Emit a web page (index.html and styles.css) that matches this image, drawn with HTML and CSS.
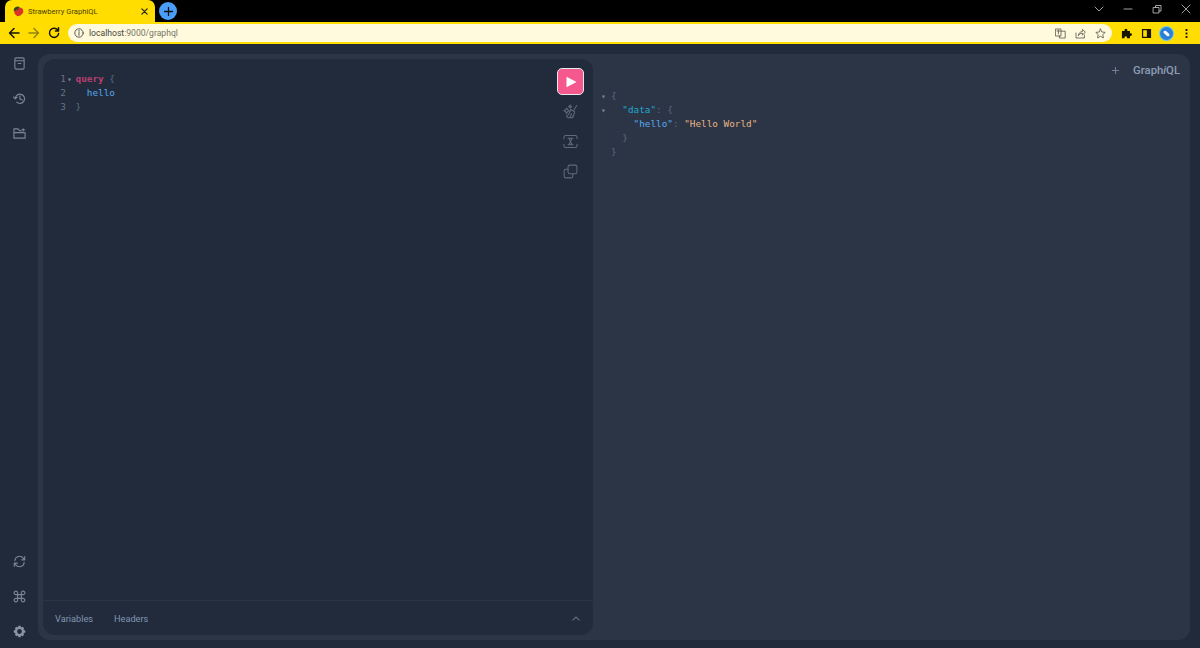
FILE: index.html
```html
<!doctype html>
<html>
  <head>
    <meta http-equiv="content-type" content="text/html; charset=UTF-8">
    <title>Strawberry GraphiQL</title>
    <link rel="stylesheet" href="styles.css">
  </head>

  <body>
    <div class="tabStrip">
      <div class="tab">
        <svg class="favicon" viewBox="0 0 12 12">
          <path fill="#d8342a" d="M3 2.6 Q7 .6 10.2 2.6 Q12.2 5.4 10.4 8.2 Q7.6 11.6 4.4 11 Q1.4 9.6 1.2 6 Q1.4 3.6 3 2.6 Z"/>
          <path fill="#33481f" d="M.8 5.6 Q.4 2 3 1 Q5.4 -.2 7.4 1.4 L5.6 2.6 L6 4.4 L4 3.8 L2.8 5.8 L2 4.6 Z"/>
        </svg>
        <span class="tabTitle">Strawberry GraphiQL</span>
        <svg class="tabClose" viewBox="0 0 8 8"><path d="M1 1 L7 7 M7 1 L1 7"/></svg>
      </div>
      <div class="newTab">
        <svg viewBox="0 0 10 10"><path d="M5 .5 V9.5 M.5 5 H9.5"/></svg>
      </div>
      <div class="windowBtns">
        <svg viewBox="0 0 10 10"><path d="M1 3 L5 7 L9 3"/></svg>
        <svg viewBox="0 0 10 10"><path d="M1 5 H9"/></svg>
        <svg viewBox="0 0 10 10"><path d="M1.5 3.5 H7 V9 H1.5 Z M3.5 3.5 V1.5 H9 V7 H7"/></svg>
        <svg viewBox="0 0 10 10"><path d="M1 1 L9 9 M9 1 L1 9"/></svg>
      </div>
    </div>

    <div class="toolbar">
      <svg class="navBtn" viewBox="0 0 12 12"><path d="M11 6 H1.5 M6 1.5 L1.5 6 L6 10.5"/></svg>
      <svg class="navBtn off" viewBox="0 0 12 12"><path d="M1 6 H10.5 M6 1.5 L10.5 6 L6 10.5"/></svg>
      <svg class="navBtn" viewBox="0 0 12 12"><path d="M10 3.4 A4.6 4.6 0 1 0 10.6 6.6 M10.5 .8 V3.9 H7.4"/></svg>
      <div class="omnibox">
        <svg class="infoIcon" viewBox="0 0 10 10">
          <circle cx="5" cy="5" r="4.2"/>
          <path d="M5 4.4 V7.4 M5 2.4 V3.4"/>
        </svg>
        <span class="url"><b>localhost</b>:9000/graphql</span>
        <div class="omniIcons">
          <svg viewBox="0 0 11 11"><path d="M.8 1 H6 V8 H.8 Z M6 3.2 H10.2 V10 H4.4 V8 M2 3 H5 M3.4 2 V6"/></svg>
          <svg viewBox="0 0 11 11"><path d="M1 5 V10 H9.4 V7 M3.4 7.4 Q4 3.6 7.4 3.6 V1.4 L10.4 4.2 L7.4 7 V5.2 Q5 5 3.4 7.4"/></svg>
          <svg viewBox="0 0 11 11"><path d="M5.5 1 L6.9 4 L10.2 4.4 L7.8 6.6 L8.4 9.9 L5.5 8.3 L2.6 9.9 L3.2 6.6 L.8 4.4 L4.1 4 Z"/></svg>
        </div>
      </div>
      <div class="extIcons">
        <svg viewBox="0 0 12 12"><path class="solid" d="M1 3.4 H3.8 Q3.6 .8 5.4 .8 Q7.2 .8 7 3.4 H9.8 V5.8 Q12 5.6 12 7.2 Q12 8.8 9.8 8.6 V11.2 H6.6 Q6.8 9 5.2 9 Q3.6 9 3.8 11.2 H1 Z"/></svg>
        <svg viewBox="0 0 12 12"><path class="solid" d="M1 1 H11 V11 H1 Z M2.4 2.4 V9.6 H6.4 V2.4 Z" fill-rule="evenodd"/></svg>
        <div class="avatar"><span></span></div>
        <svg viewBox="0 0 12 12"><path class="solid" d="M5 1.2 H7 V3.2 H5 Z M5 5 H7 V7 H5 Z M5 8.8 H7 V10.8 H5 Z"/></svg>
      </div>
    </div>

    <div class="app">
      <div class="sidebar">
        <div class="sideGroup">
          <svg viewBox="0 0 14 14"><path d="M2 2.4 Q2 1 3.4 1 H10.6 Q12 1 12 2.4 V11.6 Q12 13 10.6 13 H3.4 Q2 13 2 11.6 Z M2 4 H12 M5.6 7 H8.4"/></svg>
          <svg viewBox="0 0 14 14"><path d="M2.4 7 A5 5 0 1 1 4 11 M.6 5.4 L2.4 7.4 L4.4 5.6 M7.4 4 V7.4 L10 8.6"/></svg>
          <svg viewBox="0 0 14 14"><path d="M1 12 V2 H5.4 L7 4 H9 M12 6 H1 M13 6 V12 H1 M11 2 V4.4 M9.6 3 H12.6"/></svg>
        </div>
        <div class="sideGroup">
          <svg viewBox="0 0 14 14"><path d="M2 6 A5 5 0 0 1 11 3.4 L12.4 5 M12 8 A5 5 0 0 1 3 10.6 L1.6 9 M12.6 1.8 V5.2 H9.4 M1.4 12.2 V8.8 H4.6"/></svg>
          <svg viewBox="0 0 14 14"><path d="M5 5 H9 V9 H5 Z M5 5 H3.2 A1.9 1.9 0 1 1 5 3.2 Z M9 5 V3.2 A1.9 1.9 0 1 1 10.8 5 Z M5 9 V10.8 A1.9 1.9 0 1 1 3.2 9 Z M9 9 H10.8 A1.9 1.9 0 1 1 9 10.8 Z"/></svg>
          <svg viewBox="0 0 14 14"><path class="gear" d="M7 4.4 A2.6 2.6 0 1 0 7 9.6 A2.6 2.6 0 1 0 7 4.4 Z M5.8 .8 H8.2 L8.6 2.6 L10.2 1.8 L12 3.6 L11.2 5.2 L13.2 5.8 V8.2 L11.2 8.8 L12 10.4 L10.2 12.2 L8.6 11.4 L8.2 13.2 H5.8 L5.4 11.4 L3.8 12.2 L2 10.4 L2.8 8.8 L.8 8.2 V5.8 L2.8 5.2 L2 3.6 L3.8 1.8 L5.4 2.6 Z" fill-rule="evenodd"/></svg>
        </div>
      </div>

      <div class="panel">
        <div class="editor">
          <div class="editorMain">
            <div class="code">
              <div class="line"><span class="num">1</span><span class="fold">▾</span><span class="kw">query</span> <span class="punct">{</span></div>
              <div class="line"><span class="num">2</span><span class="fold"></span>  <span class="field">hello</span></div>
              <div class="line"><span class="num">3</span><span class="fold"></span><span class="punct">}</span></div>
            </div>
            <div class="tools">
              <div class="execute">
                <svg viewBox="0 0 12 12"><path d="M1.5 .8 L11.5 6 L1.5 11.2 Z"/></svg>
              </div>
              <svg class="tool" viewBox="0 0 16 16"><path d="M14.6 1.6 L11.2 7 M8.4 5.8 L12.6 8.4 L10.4 14.6 H5.4 Q3.8 14 3.8 12.8 Q6.8 11.4 8.4 5.8 M7.2 14.4 L9.2 10.4 M10 14.4 L11.2 11.6 M3.8 4.4 L4.8 6.2 L6.6 7.2 L4.8 8.2 L3.8 10 L2.8 8.2 L1 7.2 L2.8 6.2 Z M7.6 1 L8.2 2.2 L9.4 2.8 L8.2 3.4 L7.6 4.6 L7 3.4 L5.8 2.8 L7 2.2 Z"/></svg>
              <svg class="tool" viewBox="0 0 16 16"><path d="M1 5 V3.6 Q1 1.6 3 1.6 H13 Q15 1.6 15 3.6 V5 M1 11 V12.4 Q1 14.4 3 14.4 H13 Q15 14.4 15 12.4 V11 M5.4 4.6 H10.6 M5.4 11.4 H10.6 M6.4 4.6 L9.6 11.4 M9.6 4.6 L6.4 11.4"/></svg>
              <svg class="tool" viewBox="0 0 16 16"><path d="M5.4 3 Q5.4 1.2 7.2 1.2 H13 Q14.8 1.2 14.8 3 V8.6 Q14.8 10.4 13 10.4 H7.2 Q5.4 10.4 5.4 8.6 Z M5.4 5.6 H3 Q1.2 5.6 1.2 7.4 V13 Q1.2 14.8 3 14.8 H8.6 Q10.4 14.8 10.4 13 V10.4"/></svg>
            </div>
          </div>
          <div class="editorFooter">
            <span class="footTab">Variables</span>
            <span class="footTab">Headers</span>
            <svg class="chevron" viewBox="0 0 8 5"><path d="M.8 4.2 L4 1 L7.2 4.2"/></svg>
          </div>
        </div>

        <div class="result">
          <div class="resultHead">
            <svg viewBox="0 0 8 8"><path d="M4 .4 V7.6 M.4 4 H7.6"/></svg>
            <span class="logo">Graph<i>i</i>QL</span>
          </div>
          <div class="json">
            <div class="line"><span class="fold">▾</span><span class="punct">{</span></div>
            <div class="line"><span class="fold">▾</span>  <span class="key">"data"</span><span class="punct">: {</span></div>
            <div class="line"><span class="fold"></span>    <span class="field">"hello"</span><span class="punct">: </span><span class="str">"Hello World"</span></div>
            <div class="line"><span class="fold"></span>  <span class="punct">}</span></div>
            <div class="line"><span class="fold"></span><span class="punct">}</span></div>
          </div>
        </div>
      </div>
    </div>
  </body>
</html>
```

FILE: styles.css
```css
html, body {
  margin: 0;
  height: 100%;
  overflow: hidden;
}

body {
  display: flex;
  flex-direction: column;
  background-color: #212a3a;
  font-family: "Roboto", "Liberation Sans", sans-serif;
}

svg {
  display: block;
  fill: none;
  stroke-linecap: round;
  stroke-linejoin: round;
}

/* browser chrome */

.tabStrip {
  display: flex;
  align-items: center;
  height: 22px;
  padding-left: 5px;
  background-color: #000;
}

.tab {
  display: flex;
  align-items: center;
  width: 150px;
  height: 22px;
  padding: 0 7px 0 8px;
  box-sizing: border-box;
  border-radius: 7px 7px 0 0;
  background-color: #ffdd00;
}

.favicon {
  width: 11px;
  height: 11px;
}

.tabTitle {
  flex: 1;
  margin-left: 4px;
  font-size: 7.6px;
  color: #4d4300;
}

.tabClose {
  width: 7px;
  height: 7px;
  stroke: #222;
  stroke-width: 1.4;
}

.newTab {
  display: flex;
  align-items: center;
  justify-content: center;
  width: 18px;
  height: 18px;
  margin-left: 4px;
  border-radius: 50%;
  background-color: #4a9df8;
}

.newTab svg {
  width: 9px;
  height: 9px;
  stroke: #101010;
  stroke-width: 1.4;
}

.windowBtns {
  display: flex;
  gap: 19px;
  margin-left: auto;
  padding: 0 9px 5px 0;
}

.windowBtns svg {
  width: 10px;
  height: 10px;
  stroke: #b4b4b4;
  stroke-width: .9;
}

.toolbar {
  display: flex;
  align-items: center;
  height: 22px;
  padding-left: 8px;
  background-color: #ffdd00;
}

.navBtn {
  width: 12px;
  height: 12px;
  margin-right: 8px;
  stroke: #151200;
  stroke-width: 1.5;
}

.navBtn.off {
  stroke: #94830f;
}

.omnibox {
  display: flex;
  flex: 1;
  align-items: center;
  height: 18px;
  padding: 0 6px;
  border-radius: 9px;
  background-color: #fff9de;
}

.infoIcon {
  width: 10px;
  height: 10px;
  stroke: #4a4a44;
  stroke-width: .9;
}

.url {
  margin-left: 5px;
  font-size: 8.6px;
  color: #77756a;
}

.url b {
  font-weight: 400;
  color: #46453c;
}

.omniIcons {
  display: flex;
  gap: 9px;
  margin-left: auto;
}

.omniIcons svg {
  width: 11px;
  height: 11px;
  stroke: #55544a;
  stroke-width: .8;
}

.extIcons {
  display: flex;
  align-items: center;
  gap: 9px;
  padding: 0 8px 0 9px;
}

.extIcons svg {
  width: 11px;
  height: 11px;
}

.solid {
  fill: #191500;
}

.avatar {
  display: flex;
  align-items: center;
  justify-content: center;
  width: 13px;
  height: 13px;
  margin: 0 -1px;
  border-radius: 50%;
  background-color: #2b7fd6;
  box-shadow: 0 0 0 1px #6cc8f5;
}

.avatar span {
  width: 7px;
  height: 3px;
  border-radius: 2px;
  background-color: #fff;
  transform: rotate(40deg);
}

/* graphiql */

.app {
  display: flex;
  flex: 1;
  min-height: 0;
}

.sidebar {
  display: flex;
  flex-direction: column;
  justify-content: space-between;
  width: 38px;
  padding: 13px 0 10px;
  box-sizing: border-box;
}

.sideGroup {
  display: flex;
  flex-direction: column;
  align-items: center;
  gap: 22px;
}

.sideGroup svg {
  width: 13px;
  height: 13px;
  stroke: #7a8696;
  stroke-width: 1.2;
}

.sideGroup .gear {
  fill: #8a95a3;
  stroke: none;
}

.panel {
  display: flex;
  flex: 1;
  margin: 10px 10px 8px 0;
  padding: 5px 0 5px 5px;
  border-radius: 12px;
  background-color: #2c3546;
}

.editor {
  display: flex;
  flex-direction: column;
  width: 550px;
  border-radius: 12px;
  background-color: #212b3b;
}

.editorMain {
  display: flex;
  flex: 1;
}

.code {
  flex: 1;
  padding-top: 13px;
}

.code, .json {
  font-family: "DejaVu Sans Mono", monospace;
  font-size: 9.35px;
  line-height: 14px;
}

.line {
  height: 14px;
  white-space: pre;
}

.code .line {
  padding-left: 15px;
}

.num, .fold {
  display: inline-block;
}

.num {
  width: 8px;
  text-align: right;
  color: #667386;
}

.fold {
  width: 11px;
  font-size: 8px;
  text-indent: 1px;
  color: #7b8696;
}

.code .fold {
  width: 9.5px;
}

.kw {
  font-weight: 700;
  color: #b83f71;
}

.field {
  color: #58a8ee;
}

.key {
  color: #1ea8d2;
}

.str {
  color: #e8b483;
}

.punct {
  color: #5c6b80;
}

.tools {
  display: flex;
  flex-direction: column;
  align-items: center;
  width: 27px;
  margin-right: 9px;
  padding-top: 9px;
}

.execute {
  display: flex;
  align-items: center;
  justify-content: center;
  width: 25px;
  height: 25px;
  margin-bottom: 9px;
  border: 1px solid #e6e9ee;
  border-radius: 5px;
  background-color: #f5588d;
}

.execute svg {
  width: 12px;
  height: 12px;
  fill: #fff;
}

.tool {
  width: 15px;
  height: 15px;
  margin-bottom: 15px;
  stroke: #5f6b7b;
  stroke-width: 1.1;
}

.editorFooter {
  display: flex;
  align-items: center;
  gap: 21px;
  height: 34px;
  padding: 0 12px;
  border-top: 1px solid #2c3546;
}

.footTab {
  font-size: 9.2px;
  color: #8296b2;
}

.chevron {
  width: 8px;
  height: 5px;
  margin-left: auto;
  margin-right: 1px;
  stroke: #5f6b7b;
  stroke-width: 1.1;
}

.result {
  flex: 1;
}

.resultHead {
  display: flex;
  align-items: center;
  justify-content: flex-end;
  gap: 14px;
  height: 22px;
  padding: 0 10px 0 0;
}

.resultHead svg {
  width: 7px;
  height: 7px;
  stroke: #7d8a9c;
  stroke-width: 1;
}

.logo {
  font-size: 11.3px;
  font-weight: 500;
  color: #8c9db5;
}

.json {
  padding: 8px 0 0 7px;
}
```
